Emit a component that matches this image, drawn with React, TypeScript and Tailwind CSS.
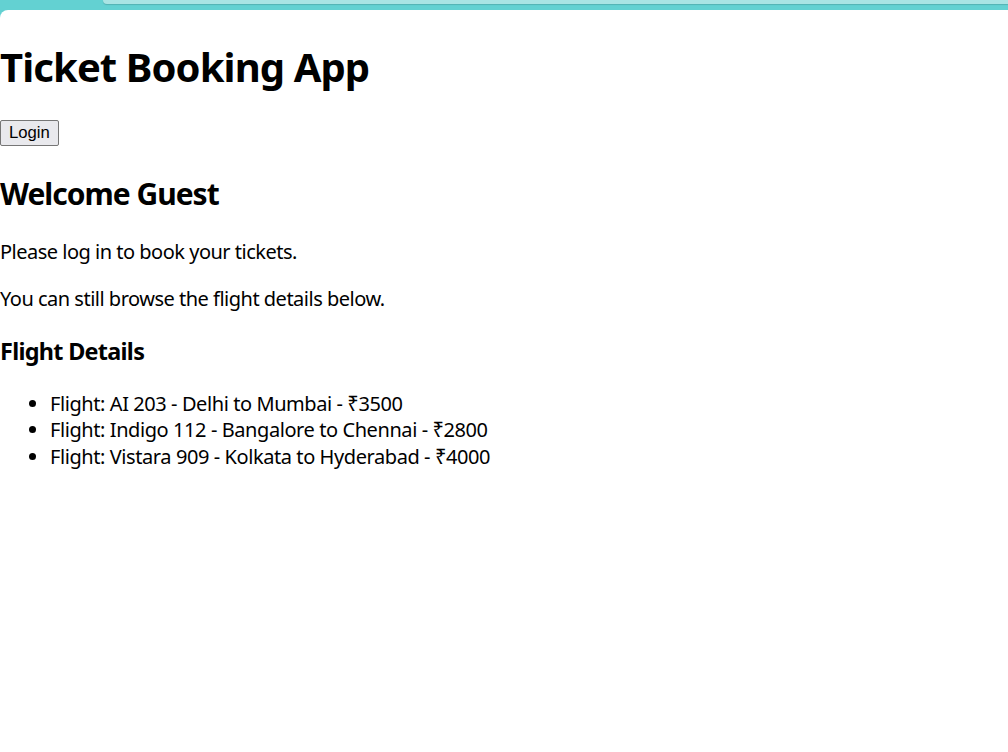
import React from "react";

const flights = [
  "Flight: AI 203 - Delhi to Mumbai - ₹3500",
  "Flight: Indigo 112 - Bangalore to Chennai - ₹2800",
  "Flight: Vistara 909 - Kolkata to Hyderabad - ₹4000",
];

const App: React.FC = () => {
  return (
    <div className="min-h-screen bg-[#63d1d2] font-['Noto_Sans',sans-serif] text-black">
      {/* top strip */}
      <div className="flex h-[10px]">
        <div className="w-[103px]" />
        <div className="h-[4px] flex-1 rounded-bl-[8px] bg-[#a9e4e4] shadow-[0_1px_1px_rgba(0,0,0,0.15)]" />
      </div>

      {/* page */}
      <div className="min-h-[742px] rounded-tl-[8px] bg-white pt-[30px]">
        <h1 className="text-[40px] font-bold leading-[53px] tracking-[-0.9px]">Ticket Booking App</h1>

        <div className="mt-[27px]">
          <button className="h-[26px] rounded-[2px] border border-[#767676] bg-[#e9e9ed] px-[8px] font-['Liberation_Sans',sans-serif] text-[16.7px] leading-none">
            Login
          </button>
        </div>

        <h2 className="mt-[28px] text-[30px] font-bold leading-[40px] tracking-[-1px]">Welcome Guest</h2>

        <p className="mt-[25px] text-[20px] leading-[26.6px] tracking-[-0.5px]">Please log in to book your tickets.</p>
        <p className="mt-[20px] text-[20px] leading-[26.6px] tracking-[-0.5px]">You can still browse the flight details below.</p>

        <h3 className="mt-[23px] text-[23.4px] font-bold leading-[31px] tracking-[-0.7px]">Flight Details</h3>

        <ul className="mt-[24px] list-disc pl-[50px] text-[20px] leading-[26.9px] tracking-[-0.42px]">
          {flights.map((f) => (
            <li key={f}>{f}</li>
          ))}
        </ul>
      </div>
    </div>
  );
};

export default App;
